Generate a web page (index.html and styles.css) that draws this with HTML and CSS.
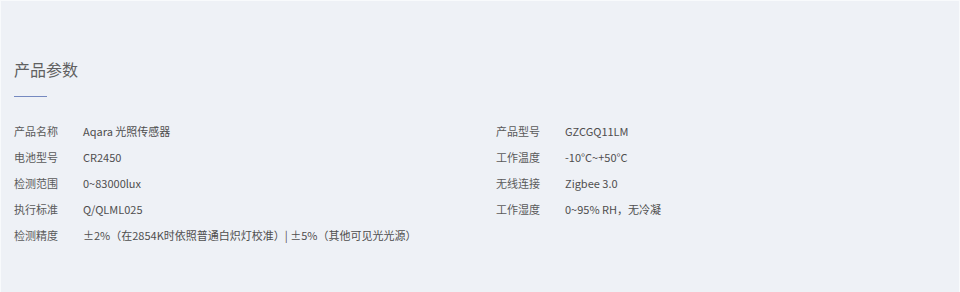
FILE: index.html
```html
<!DOCTYPE html>
<html lang="zh">
<head>
<meta charset="utf-8">
<link rel="stylesheet" href="styles.css">
</head>
<body>
<section class="params">
  <h2 class="title">产品参数</h2>
  <div class="rule"></div>
  <div class="grid">
    <div class="row"><span class="k">产品名称</span><span class="v">Aqara 光照传感器</span></div>
    <div class="row"><span class="k">产品型号</span><span class="v">GZCGQ11LM</span></div>
    <div class="row"><span class="k">电池型号</span><span class="v">CR2450</span></div>
    <div class="row"><span class="k">工作温度</span><span class="v">-10°C~+50°C</span></div>
    <div class="row"><span class="k">检测范围</span><span class="v">0~83000lux</span></div>
    <div class="row"><span class="k">无线连接</span><span class="v">Zigbee 3.0</span></div>
    <div class="row"><span class="k">执行标准</span><span class="v">Q/QLML025</span></div>
    <div class="row"><span class="k">工作湿度</span><span class="v">0~95% RH，无冷凝</span></div>
    <div class="row wide"><span class="k">检测精度</span><span class="v">±2%（在2854K时依照普通白炽灯校准）| ±5%（其他可见光光源）</span></div>
  </div>
</section>
</body>
</html>
```
FILE: styles.css
```css
html, body {
  margin: 0;
  padding: 0;
  background: #eef1f6;
}
body {
  font-family: "Noto Sans CJK SC", "Noto Sans", sans-serif;
  color: #555;
}
.params {
  box-sizing: border-box;
  height: 292px;
  border-top: 1px solid #f8fafc;
  border-left: 1px solid #f8fafc;
  border-right: 1px solid #f8fafc;
  padding: 56px 0 0 13px;
}
.title {
  margin: 0;
  font-size: 16px;
  line-height: 24px;
  font-weight: 400;
  color: #606060;
}
.rule {
  width: 33px;
  height: 1px;
  margin-top: 15px;
  background: #7589c0;
}
.grid {
  margin-top: 21px;
  display: grid;
  grid-template-columns: 482px 1fr;
}
.row {
  display: flex;
  font-size: 11px;
  line-height: 26px;
  white-space: nowrap;
}
.row.wide {
  grid-column: 1 / 3;
}
.k {
  width: 69px;
  flex: none;
  color: #5a5a5a;
}
.v {
  color: #4e4e4e;
}
```
